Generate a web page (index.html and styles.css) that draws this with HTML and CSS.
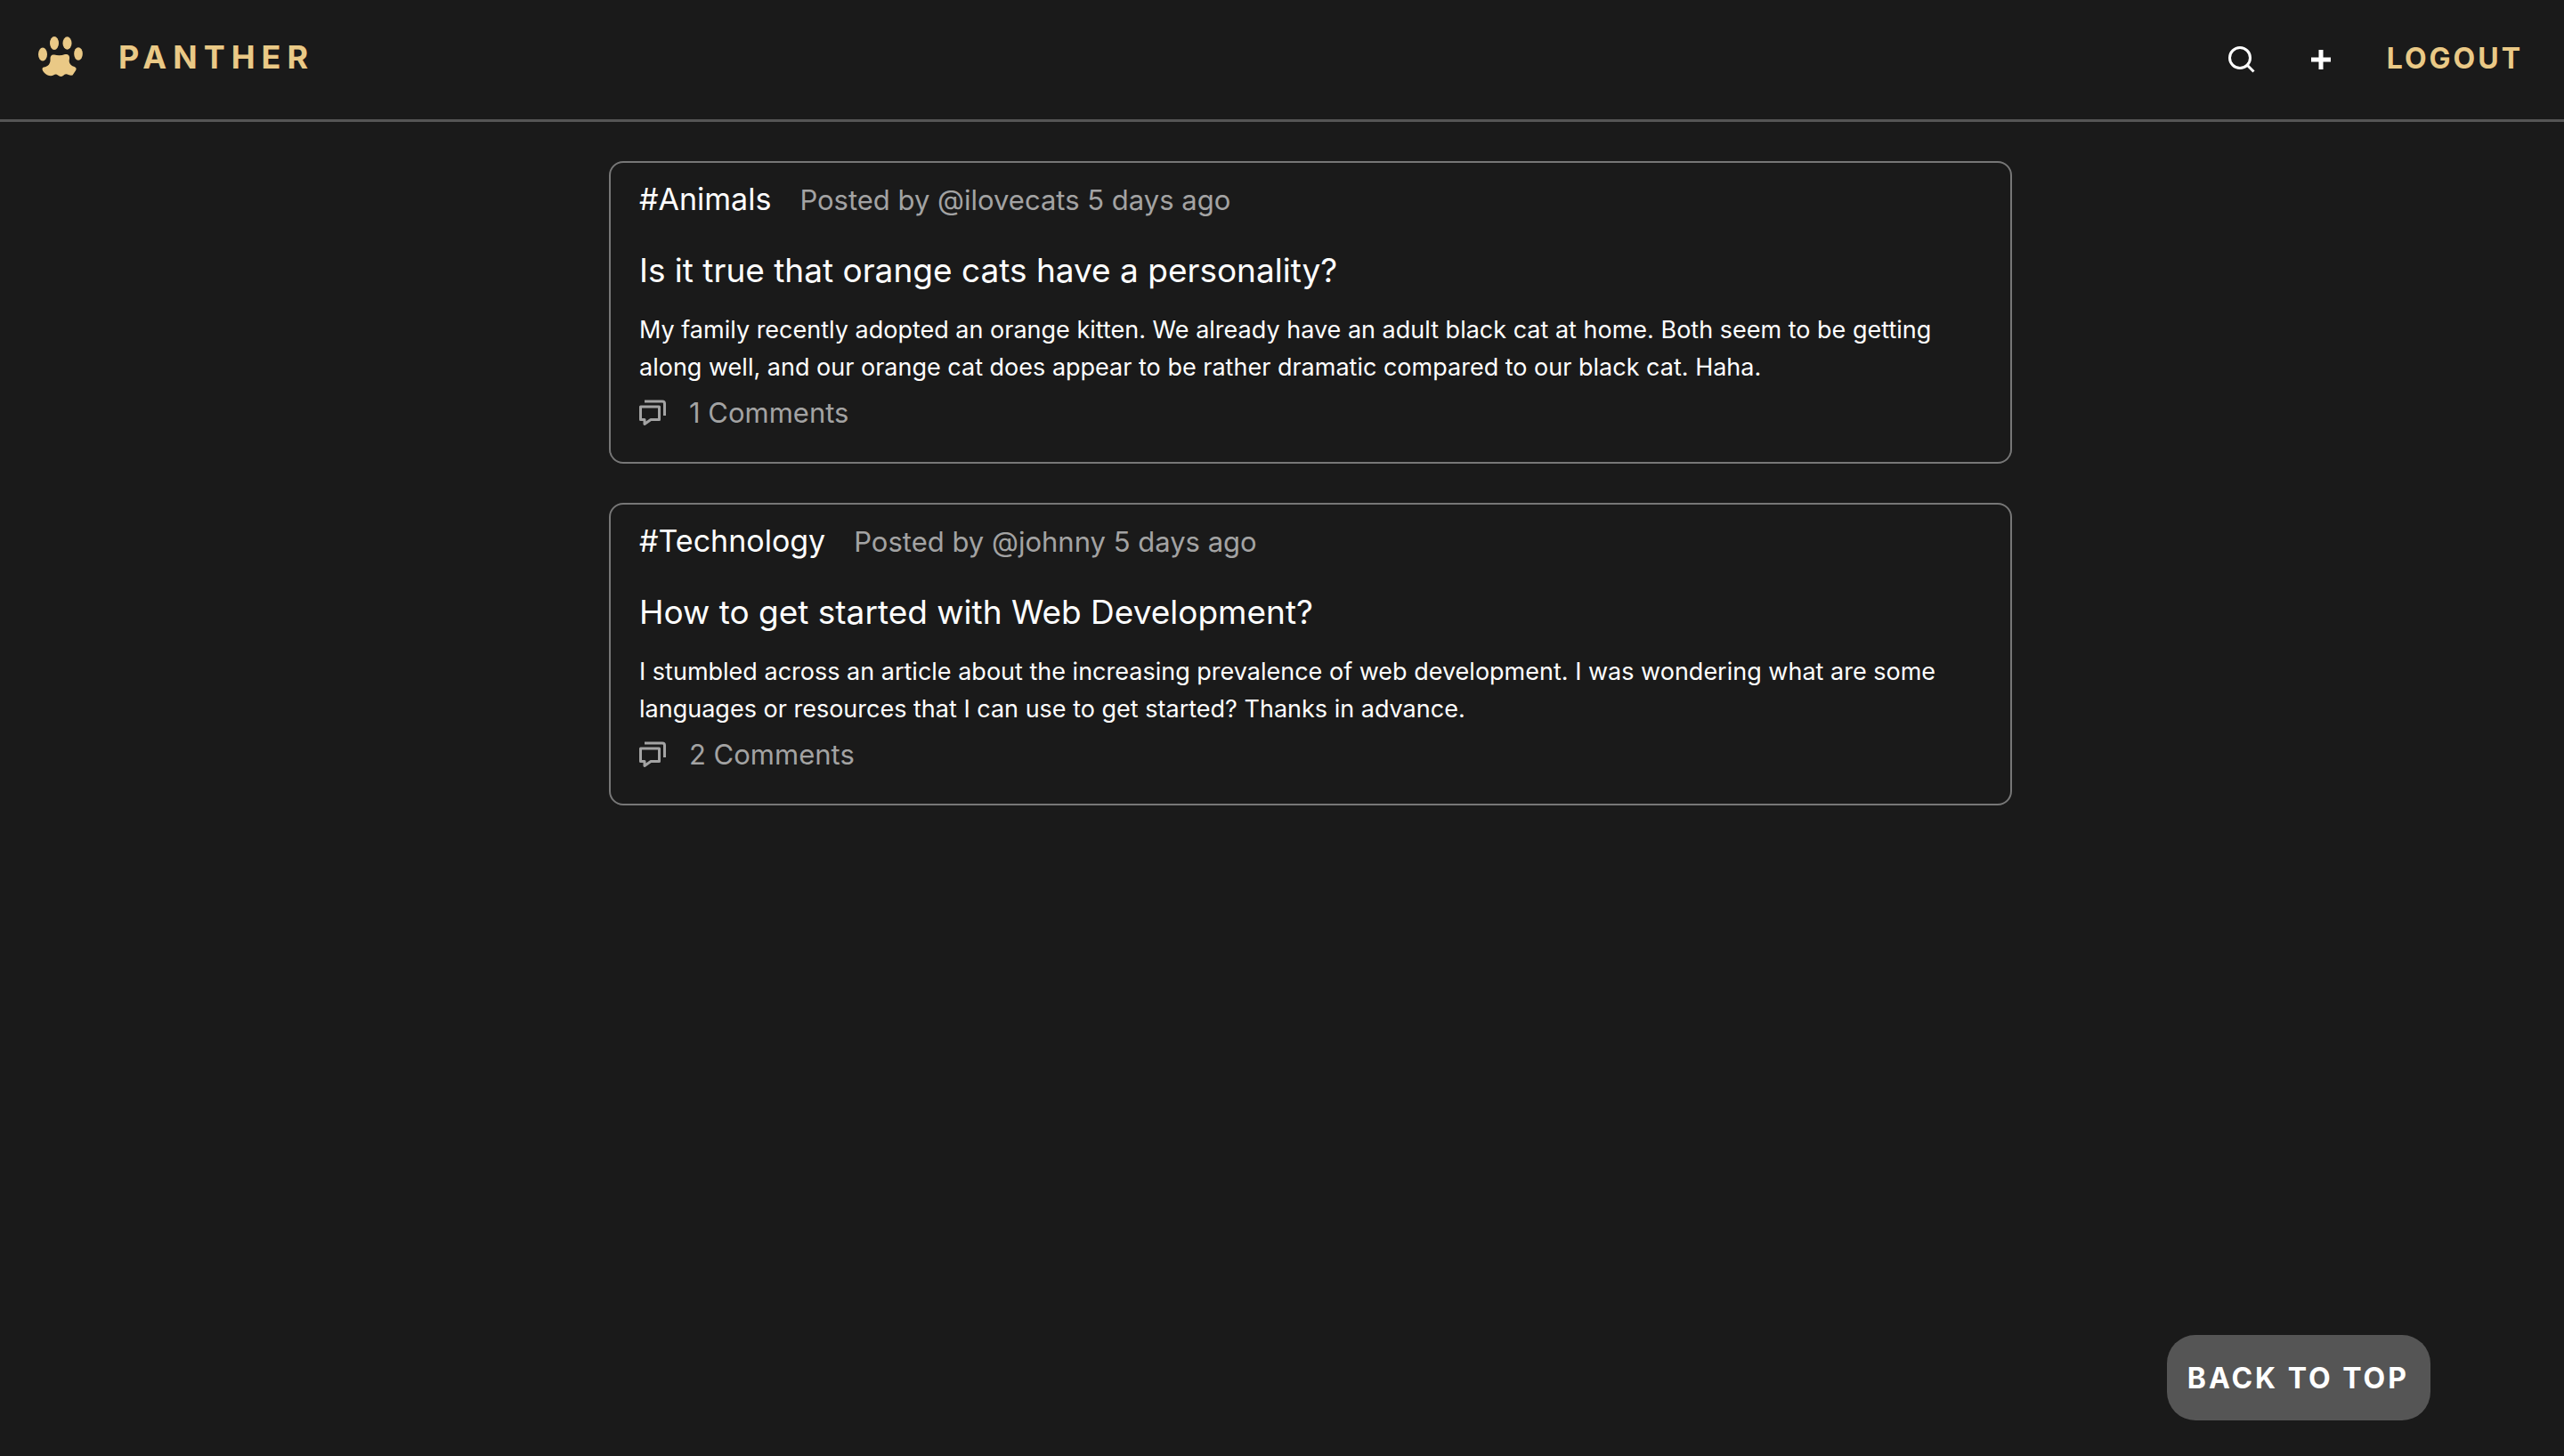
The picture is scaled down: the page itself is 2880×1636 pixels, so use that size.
FILE: index.html
```html
<!DOCTYPE html>
<html lang="en">
<head>
  <meta charset="utf-8">
  <meta name="viewport" content="width=device-width, initial-scale=1">
  <title>Panther</title>
  <link rel="stylesheet" href="styles.css">
</head>
<body>
  <header class="navbar">
    <a class="brand" href="#">
      <svg class="brand-icon" viewBox="0 0 50 46" aria-hidden="true">
        <ellipse cx="5" cy="20" rx="5" ry="7.5"/>
        <ellipse cx="18" cy="7.5" rx="5" ry="7.5"/>
        <ellipse cx="32.500" cy="7.500" rx="5" ry="7.200"/>
        <ellipse cx="45" cy="19.500" rx="4.800" ry="7.300"/>
        <path d="M13.500 25C13.500 21.500 15 20 18 20.500C22 21.500 26 21.500 30 20C33.500 19.500 35.500 21.500 35 25C34 29 35.500 31.500 39 33.500C42 34 44 36 41.500 39L38.500 43.500Q35 44 32.500 42.500Q30 41.500 28 44Q25 46 22 43.500Q20 41.500 17 43.500C14 45.500 9 43.500 6.500 40.500C4.500 38 3.500 35.500 6 34.500C11 34 14 30.500 13.500 25Z"/>
      </svg>
      <span>PANTHER</span>
    </a>
    <nav class="actions">
      <button class="icon-button" type="button" aria-label="Search">
        <svg class="search-icon" viewBox="0 0 30 30" aria-hidden="true">
          <circle cx="13" cy="13" r="11.500"/>
          <path d="M20.500 20.500L28.500 28.500"/>
        </svg>
      </button>
      <button class="icon-button" type="button" aria-label="New post">
        <svg class="plus-icon" viewBox="0 0 22 22" aria-hidden="true">
          <path d="M11 0V22M0 11H22"/>
        </svg>
      </button>
      <button class="logout" type="button">LOGOUT</button>
    </nav>
  </header>

  <main class="page">
    <div class="feed">
      <article class="post">
        <div class="post-meta">
          <a class="topic" href="#">#Animals</a>
          <span class="byline">Posted by @ilovecats 5 days ago</span>
        </div>
        <h2 class="post-title">Is it true that orange cats have a personality?</h2>
        <p class="post-body">My family recently adopted an orange kitten. We already have an adult black cat at home. Both seem to be getting along well, and our orange cat does appear to be rather dramatic compared to our black cat. Haha.</p>
        <a class="comments" href="#">
          <svg class="comments-icon" viewBox="0 0 30 30" aria-hidden="true">
            <path d="M1.500 8H22.500V22.500H13L6 27.500V22.500H1.500Z"/>
            <path d="M6 2H26Q28.500 2 28.500 4.500V18"/>
          </svg>
          <span>1 Comments</span>
        </a>
      </article>

      <article class="post">
        <div class="post-meta">
          <a class="topic" href="#">#Technology</a>
          <span class="byline">Posted by @johnny 5 days ago</span>
        </div>
        <h2 class="post-title">How to get started with Web Development?</h2>
        <p class="post-body">I stumbled across an article about the increasing prevalence of web development. I was wondering what are some languages or resources that I can use to get started? Thanks in advance.</p>
        <a class="comments" href="#">
          <svg class="comments-icon" viewBox="0 0 30 30" aria-hidden="true">
            <path d="M1.500 8H22.500V22.500H13L6 27.500V22.500H1.500Z"/>
            <path d="M6 2H26Q28.500 2 28.500 4.500V18"/>
          </svg>
          <span>2 Comments</span>
        </a>
      </article>
    </div>
  </main>

  <button class="back-to-top" type="button">BACK TO TOP</button>
</body>
</html>
```
FILE: styles.css
```css
* {
  box-sizing: border-box;
}

body {
  margin: 0;
  background: #1a1a1a;
  color: #fff;
  font-family: Inter, "Liberation Sans", sans-serif;
  font-size: 27px;
  line-height: 42px;
}

a {
  color: inherit;
  text-decoration: none;
}

button {
  padding: 0;
  border: 0;
  background: none;
  color: inherit;
  font: inherit;
  cursor: pointer;
}

.navbar {
  display: flex;
  align-items: center;
  justify-content: space-between;
  padding: 40px 46px 46px 43px;
  border-bottom: 3px solid #555;
}

.brand {
  display: flex;
  align-items: center;
  gap: 40px;
  color: #eac986;
  font-size: 36px;
  font-weight: 700;
  line-height: 48px;
  letter-spacing: 7px;
}

.brand-icon {
  width: 50px;
  height: 46px;
  fill: currentColor;
}

.actions {
  display: flex;
  align-items: center;
  gap: 63px;
  padding-top: 4px;
}

.icon-button {
  display: flex;
  padding-top: 2px;
}

.search-icon {
  width: 30px;
  height: 30px;
  fill: none;
  stroke: #fff;
  stroke-width: 3;
}

.plus-icon {
  width: 22px;
  height: 22px;
  stroke: #fff;
  stroke-width: 5;
}

.logout {
  color: #eac986;
  font-size: 32px;
  font-weight: 700;
  letter-spacing: 3px;
}

.page {
  display: grid;
  grid-template-columns: 684fr 1576fr 620fr;
  padding: 44px 0;
}

.feed {
  display: grid;
  grid-column: 2;
  gap: 44px;
}

.post {
  padding: 14px 32px 30px;
  border: 2px solid #777;
  border-radius: 16px;
}

.post-meta {
  display: flex;
  align-items: baseline;
  gap: 32px;
  line-height: 54px;
}

.topic {
  font-size: 34px;
}

.byline {
  color: #a3a3a3;
  font-size: 31px;
}

.post-title {
  margin: 22px 0 16px;
  font-size: 37px;
  font-weight: 400;
  line-height: 60px;
}

.post-body {
  margin: 0 0 6px;
}

.comments {
  display: flex;
  align-items: center;
  gap: 26px;
  margin-bottom: 1px;
  color: #a3a3a3;
  font-size: 31px;
  line-height: 48px;
}

.comments-icon {
  width: 30px;
  height: 30px;
  fill: none;
  stroke: currentColor;
  stroke-width: 3;
  stroke-linejoin: round;
}

.back-to-top {
  position: fixed;
  right: 150px;
  bottom: 40px;
  padding: 25px 24px 23px 23px;
  border-radius: 32px;
  background: #555;
  font-size: 32px;
  font-weight: 700;
  line-height: 48px;
  letter-spacing: 3px;
}
```
